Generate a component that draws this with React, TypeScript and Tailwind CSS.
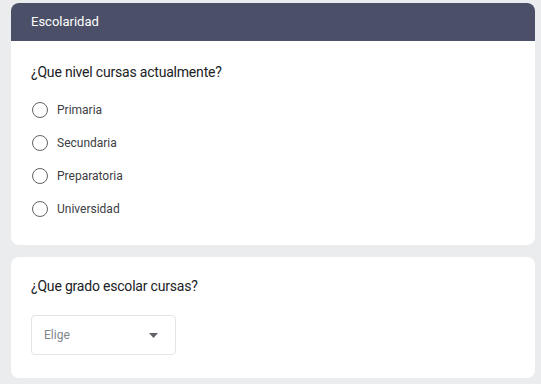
import React from "react";

const options = ["Primaria", "Secundaria", "Preparatoria", "Universidad"];

export default function App() {
  return (
    <div
      className="min-h-[384px] w-full bg-[#ebecee] pl-[11px] pr-[6px] pt-[3px] pb-[6px]"
      style={{ fontFamily: "Roboto, 'Liberation Sans', sans-serif" }}
    >
      <div className="rounded-lg bg-white overflow-hidden">
        <div className="h-[38px] bg-[#4b5068] flex items-center pl-[20px] text-[13px] text-white">
          Escolaridad
        </div>
        <div className="pl-[20px] pt-[21px] pb-[20px]">
          <div className="text-[14px] tracking-[-0.2px] leading-[20px] text-[#202124]">¿Que nivel cursas actualmente?</div>
          <div className="mt-[11px] flex flex-col">
            {options.map((o) => (
              <div key={o} className="h-[33px] flex items-center">
                <div className="ml-[1px] w-[16px] h-[16px] rounded-full border-[1.6px] border-[#5f6368]" />
                <span className="ml-[9px] text-[12px] text-[#3c4043]">{o}</span>
              </div>
            ))}
          </div>
        </div>
      </div>
      <div className="mt-[12px] rounded-lg bg-white pl-[20px] pt-[19px] pb-[23px]">
        <div className="text-[14px] tracking-[-0.2px] leading-[20px] text-[#202124]">¿Que grado escolar cursas?</div>
        <div className="mt-[19px] w-[145px] h-[40px] rounded border border-[#e3e4e6] flex items-center justify-between pl-[12px] pr-[17px]">
          <span className="text-[12px] text-[#80868b]">Elige</span>
          <svg width="9" height="5" viewBox="0 0 9 5">
            <path d="M0 0 L9 0 L4.5 5 Z" fill="#5f6368" />
          </svg>
        </div>
      </div>
    </div>
  );
}
